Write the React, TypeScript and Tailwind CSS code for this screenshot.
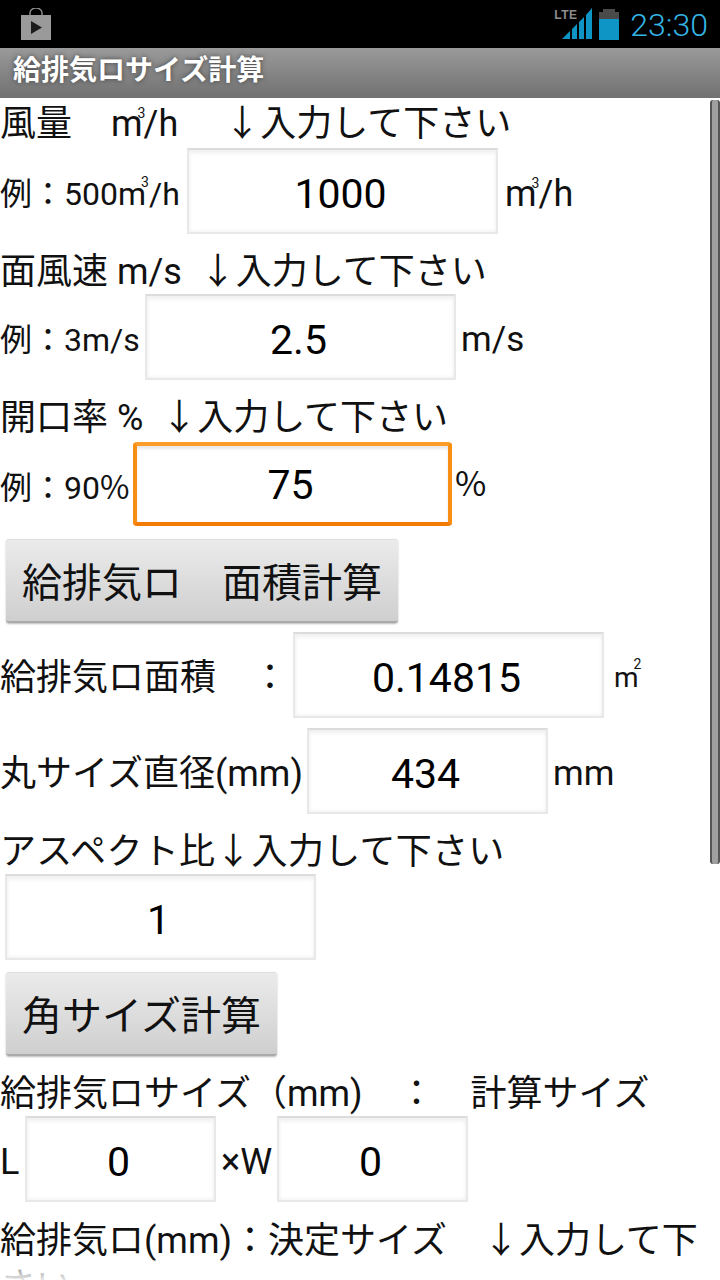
const font = "font-['Roboto','Noto_Sans_CJK_JP',sans-serif]";

function Field({ value, widthClass, focused }: { value: string; widthClass: string; focused?: boolean }) {
  if (focused) {
    return (
      <div className={`${widthClass} h-[84px] mt-[2px] shrink-0 flex items-center justify-center pt-[2px] pr-[4px] rounded-[4px] border-[4px] border-t-[#fb9d28] border-x-[#f98e15] border-b-[#f47c06] bg-white text-[41px] text-black shadow-[inset_0_3px_3px_#e8e8e8]`}>
        <span>{value}</span>
      </div>
    );
  }
  return (
    <div className={`${widthClass} h-[86px] shrink-0 flex items-center justify-center pt-[6px] pr-[4px] border-2 border-t-[#dcdcdc] border-x-[#e8e8e8] border-b-[#e8e8e8] bg-white text-[41px] text-black shadow-[inset_0_3px_4px_#efefef,inset_0_-2px_3px_#f6f6f6]`}>
      <span>{value}</span>
    </div>
  );
}

function Heading({ children, first }: { children: React.ReactNode; first?: boolean }) {
  return (
    <div className={`${first ? 'h-[50px] pt-[2px]' : 'h-[60px] pt-[14px]'} leading-[49px] text-[36px] text-[#111] whitespace-pre`}>
      {children}
    </div>
  );
}

function Row({ children }: { children: React.ReactNode }) {
  return <div className="flex items-center h-[86px] text-[36px] leading-[48px] text-[#111] whitespace-pre [&>span]:pt-[6px]">{children}</div>;
}

function Small({ children, widthClass }: { children: React.ReactNode; widthClass: string }) {
  return <span className={`${widthClass} shrink-0 text-[32px] whitespace-pre`}>{children}</span>;
}

function Cube({ n }: { n: string }) {
  return (
    <>
      m<span className="inline-block w-0 text-[14px] leading-[0] align-[18px] -ml-[5px] mr-[5px]">{n}</span>
    </>
  );
}

function Btn({ children, widthClass }: { children: React.ReactNode; widthClass: string }) {
  return (
    <div className={`${widthClass} ml-[6px] h-[84px] flex items-center justify-center pt-[6px] rounded-[3px] bg-gradient-to-b from-[#ebebeb] to-[#cfcfcf] border-b-[2px] border-b-[#aaaaaa] border-t border-t-[#dedede] text-[40px] text-[#111] whitespace-pre shadow-[0_1px_2px_#bbbbbb]`}>
      {children}
    </div>
  );
}

function Status() {
  return (
    <div className="h-[48px] bg-black flex items-center justify-between">
      <svg width="30" height="32" viewBox="0 0 30 32" className="ml-[21px]">
        <path d="M9 8V5a6 5 0 0 1 12 0v3" fill="none" stroke="#8a8a8a" strokeWidth="1.5" />
        <rect x="0" y="7" width="30" height="25" fill="#9a9a9a" />
        <path d="M10 13l11 6.5-11 6.5z" fill="#1c1c1c" />
      </svg>
      <div className="flex items-center mr-[12px]">
        <div className="relative w-[38px] h-[32px]">
          <span className="absolute left-0 top-[1px] text-[12px] leading-[13px] font-bold tracking-[0.5px] text-[#8d8d8d] font-['Liberation_Sans',sans-serif]">LTE</span>
          <svg width="30" height="31" viewBox="0 0 30 31" className="absolute left-[8px] top-0">
            <path d="M0 31L8 23V31ZM10 21L15 16V31H10ZM17 14L22 9V31H17ZM24 7L30 0V31H24Z" fill="#0f94c6" />
          </svg>
        </div>
        <svg width="20" height="31" viewBox="0 0 20 31" className="ml-[7px]">
          <rect x="4" y="0" width="12" height="3" fill="#4a4a4a" />
          <rect x="0" y="3" width="20" height="7" fill="#4a4a4a" />
          <rect x="0" y="10" width="20" height="21" fill="#0f94c6" />
        </svg>
        <span className="ml-[11px] text-[32px] font-light leading-[36px] text-[#33b5e5] font-['Roboto',sans-serif] mt-[2px]">23:30</span>
      </div>
    </div>
  );
}

export default function App() {
  return (
    <div className={`relative w-[720px] h-[1280px] overflow-hidden bg-white ${font}`}>
      <Status />
      <div className="h-[50px] pl-[13px] pb-[4px] flex items-center bg-gradient-to-b from-[#9a9a9a] to-[#717171] text-[28px] font-bold text-white [text-shadow:0_0_5px_rgba(60,60,60,0.9)]">
        給排気ロサイズ計算
      </div>

      <Heading first>{'風量　'}<span className="ml-[3px]"><Cube n="3" /><span className="ml-[1px]">/h</span>{'　'}</span><span className="ml-[10px]">↓入力して下さい</span></Heading>
      <Row>
        <Small widthClass="w-[187px]">{'例：500'}<Cube n="3" /><span className="ml-[3px]">/h</span></Small>
        <Field value="1000" widthClass="w-[311px]" />
        <span className="ml-[7px]"><Cube n="3" /><span className="ml-[2px]">/h</span></span>
      </Row>

      <Heading>{'面風速 m/s  '}↓入力して下さい</Heading>
      <Row>
        <Small widthClass="w-[145px]">例：3m/s</Small>
        <Field value="2.5" widthClass="w-[311px]" />
        <span className="ml-[5px] text-[35px]">m/s</span>
      </Row>

      <Heading>{'開口率 %  '}↓入力して下さい</Heading>
      <Row>
        <Small widthClass="w-[133px]">例：90<span className="font-['Noto_Sans_CJK_JP',sans-serif]">%</span></Small>
        <Field value="75" widthClass="w-[319px]" focused />
        <span className="ml-[3px] mb-[8px] font-['Noto_Sans_CJK_JP',sans-serif] text-[34px]">%</span>
      </Row>

      <div className="mt-[13px]">
        <Btn widthClass="w-[392px]">{'給排気ロ　面積計算'}</Btn>
      </div>

      <div className="mt-[9px]">
        <Row>
          <span className="w-[293px] shrink-0">{'給排気ロ面積　：'}</span>
          <Field value="0.14815" widthClass="w-[311px]" />
          <span className="ml-[10px] text-[28px]"><Cube n="2" /></span>
        </Row>
      </div>

      <div className="mt-[10px]">
        <Row>
          <span className="w-[307px] shrink-0">丸サイズ直径(mm)</span>
          <Field value="434" widthClass="w-[241px]" />
          <span className="ml-[5px] text-[35px]">mm</span>
        </Row>
      </div>

      <Heading><span className="tracking-[0.3px]">アスペクト比↓入力して下さい</span></Heading>
      <Row>
        <div className="ml-[5px]">
          <Field value="1" widthClass="w-[311px]" />
        </div>
      </Row>

      <div className="mt-[12px]">
        <Btn widthClass="w-[271px]">角サイズ計算</Btn>
      </div>

      <Heading>{'給排気ロサイズ（mm)　：　計算サイズ'}</Heading>
      <Row>
        <span className="w-[25px] shrink-0">L</span>
        <Field value="0" widthClass="w-[191px]" />
        <span className="w-[61px] shrink-0 pl-[5px]">×W</span>
        <Field value="0" widthClass="w-[191px]" />
      </Row>

      <div className="pt-[16px] leading-[46px] text-[36px] text-[#111] w-[700px]">
        給排気ロ(mm)：決定サイズ　↓入力して下さい
      </div>

      <div className="absolute left-0 right-0 bottom-0 h-[20px] bg-gradient-to-b from-white/40 to-white/90" />
      <div className="absolute left-[710px] top-[100px] h-[764px] w-[10px] rounded-[3px] border-x-2 border-[#555] bg-[#a0a0a0]" />
    </div>
  );
}
